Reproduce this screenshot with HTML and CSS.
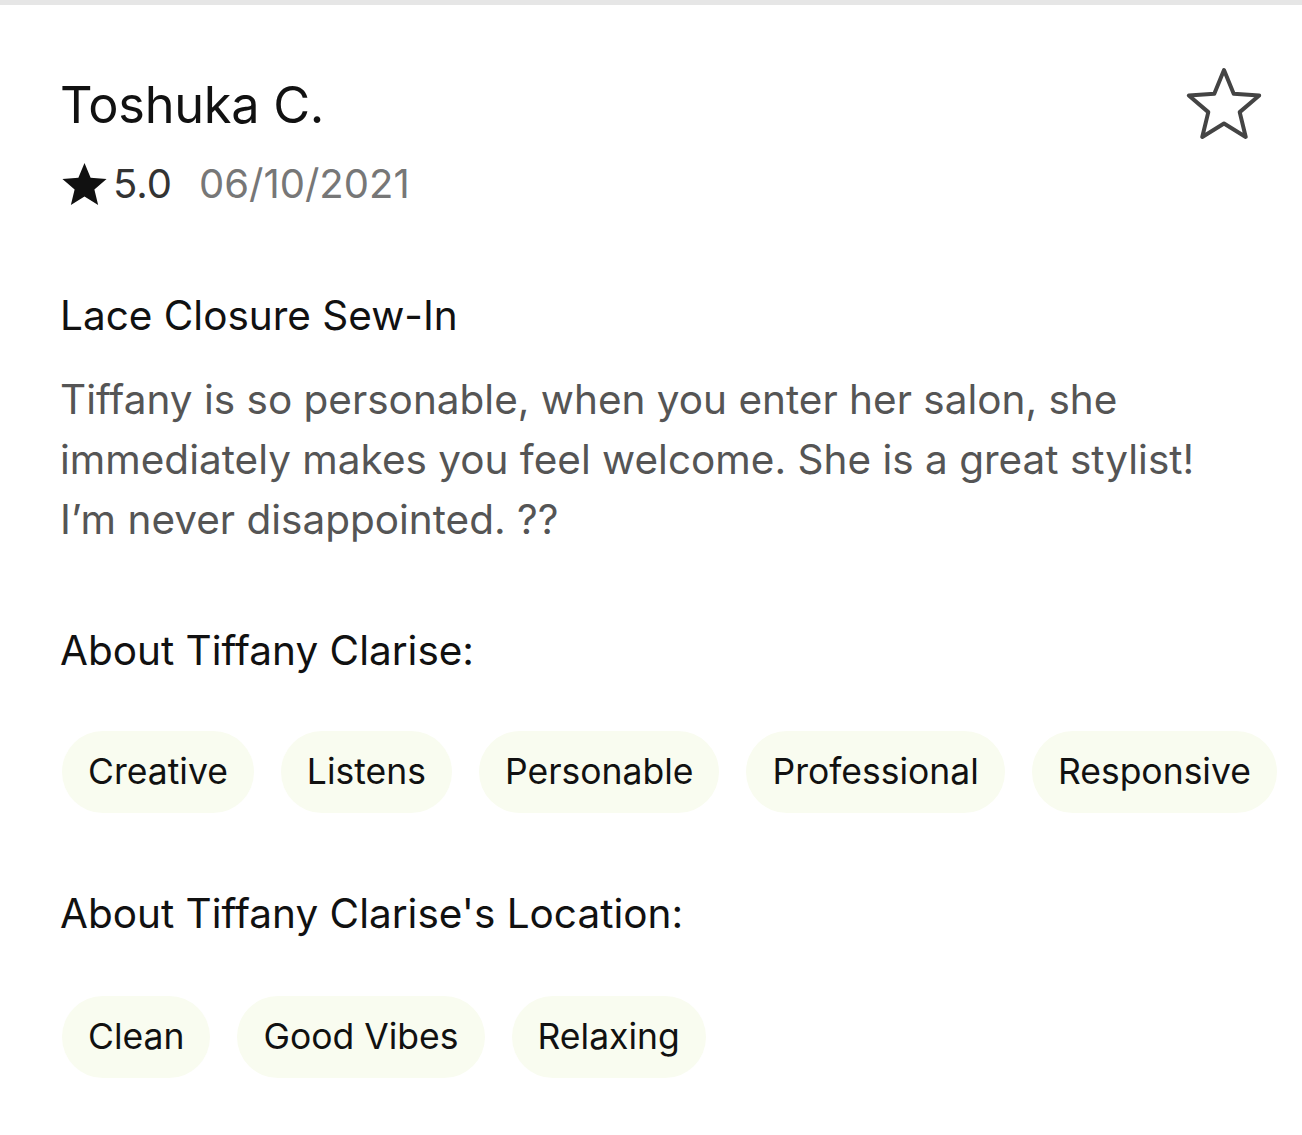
FILE: index.html
```html
<!DOCTYPE html>
<html>
<head>
<meta charset="utf-8">
<link rel="stylesheet" href="styles.css">
</head>
<body>
<div class="topbar"></div>
<main class="review">
  <header class="review-head">
    <div class="who">
      <h1 class="name">Toshuka C.</h1>
      <div class="meta">
        <svg class="star-fill" viewBox="0 0 45 42" width="45" height="42"><path d="M22.5 0L28.61 14.79L44.57 16.03L32.39 26.41L36.14 41.97L22.5 33.6L8.86 41.97L12.61 26.41L0.43 16.03L16.39 14.79Z" fill="#111"/></svg>
        <span class="score">5.0</span>
        <span class="date">06/10/2021</span>
      </div>
    </div>
    <svg class="fav" viewBox="0 0 80 80" width="80" height="80"><path d="M40 5L49.7 28.65L75.19 30.57L55.69 47.1L61.75 71.93L40 58.5L18.25 71.93L24.31 47.1L4.81 30.57L30.3 28.65Z" fill="none" stroke="#444" stroke-width="4" stroke-linejoin="round"/></svg>
  </header>

  <h2 class="service">Lace Closure Sew-In</h2>
  <p class="body-text">Tiffany is so personable, when you enter her salon, she immediately makes you feel welcome. She is a great stylist! I’m never disappointed. ??</p>

  <h3 class="section">About Tiffany Clarise:</h3>
  <ul class="tags tags-first">
    <li class="tag">Creative</li>
    <li class="tag">Listens</li>
    <li class="tag">Personable</li>
    <li class="tag">Professional</li>
    <li class="tag">Responsive</li>
  </ul>

  <h3 class="section">About Tiffany Clarise's Location:</h3>
  <ul class="tags tags-second">
    <li class="tag">Clean</li>
    <li class="tag">Good Vibes</li>
    <li class="tag">Relaxing</li>
  </ul>
</main>
</body>
</html>
```

FILE: styles.css
```css
* { box-sizing: border-box; }
html, body { margin: 0; padding: 0; background: #fff; }
body { font-family: Inter, "Noto Sans", "Liberation Sans", sans-serif; color: #111; }
.topbar { height: 5px; background: #e6e6e6; }
.review { padding: 0 24px 0 62px; }
.review-head { display: flex; justify-content: space-between; align-items: flex-start; padding-top: 70px; }
.name { margin: 0 0 0 -2px; font-size: 50.5px; font-weight: 400; line-height: 60px; letter-spacing: -0.3px; }
.meta { display: flex; align-items: center; margin-top: 25px; height: 48px; line-height: 48px; }
.star-fill { margin-right: 6px; }
.score { font-size: 40px; color: #333; }
.date { font-size: 40px; color: #777; margin-left: 27px; }
.fav { margin-top: -10px; margin-right: 14px; }
.service { margin: 83px 0 0 -2px; font-size: 40.5px; font-weight: 400; line-height: 50px; color: #111; }
.body-text { margin: 29px 0 0 -2px; font-size: 40.5px; line-height: 60px; color: #555; max-width: 1152px; }
.section { margin: 76px 0 0 -2px; font-size: 40.5px; font-weight: 400; line-height: 50px; color: #111; }
.tags { list-style: none; margin: 55px 0 0; padding: 0; display: flex; gap: 27px; }
.tags-second { margin-top: 57px; }
.tag { background: #f9fcf0; border-radius: 41px; height: 82px; padding: 0 26px 2px; display: flex; align-items: center; font-size: 35.5px; color: #111; }
```
